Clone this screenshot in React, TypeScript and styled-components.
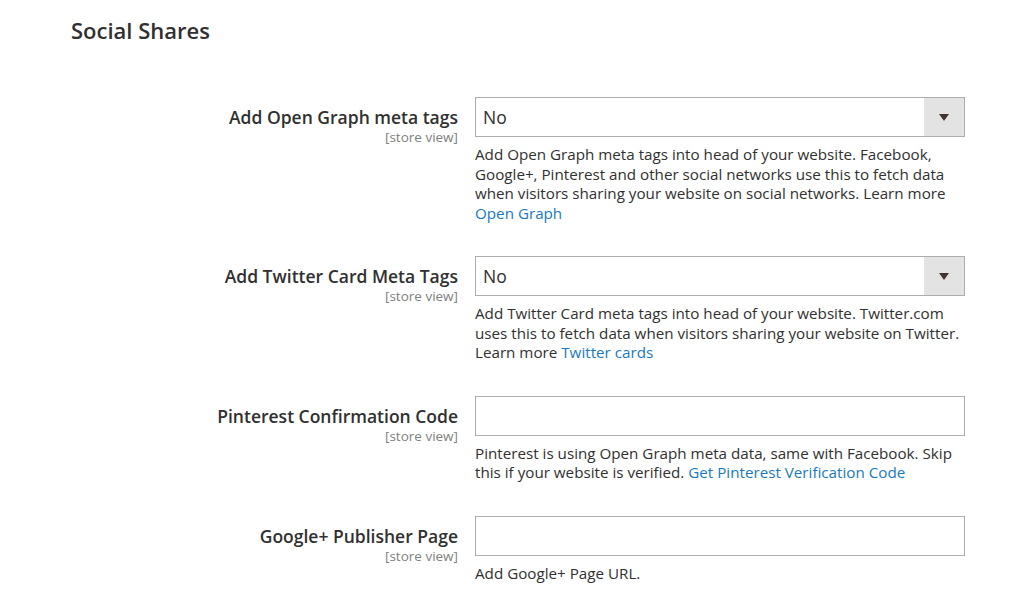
import type { ReactNode } from 'react';
import styled, { createGlobalStyle } from 'styled-components';

const GlobalStyle = createGlobalStyle`
  body {
    margin: 0;
    background: #fff;
    font-family: 'Open Sans', 'Liberation Sans', sans-serif;
    color: #303030;
  }
`;

const Page = styled.div`
  width: 1024px;
  height: 612px;
  box-sizing: border-box;
  padding-top: 15px;
  overflow: hidden;
`;

const Title = styled.h2`
  margin: 0 0 0 71px;
  font-size: 22px;
  line-height: 30px;
  font-weight: 600;
  color: #303030;
`;

const Form = styled.div`
  margin-top: 52px;
  display: flex;
  flex-direction: column;
  gap: 33px;
`;

const Row = styled.div`
  display: grid;
  grid-template-columns: 458px 490px;
  column-gap: 17px;
`;

const LabelCol = styled.div`
  display: flex;
  flex-direction: column;
  align-items: flex-end;
  padding-top: 8px;
`;

const Label = styled.div`
  font-size: 17.5px;
  line-height: 24px;
  font-weight: 600;
  color: #303030;
  white-space: nowrap;
`;

const Scope = styled.div`
  font-size: 13.5px;
  line-height: 16px;
  color: #808080;
`;

const Control = styled.div`
  display: flex;
  flex-direction: column;
`;

const Select = styled.div`
  height: 40px;
  box-sizing: border-box;
  border: 1px solid #adadad;
  display: flex;
  align-items: stretch;
  background: #fff;
`;

const SelectValue = styled.div`
  flex: 1;
  display: flex;
  align-items: center;
  padding-left: 7px;
  font-size: 17.5px;
  color: #303030;
`;

const SelectArrow = styled.div`
  width: 40px;
  background: #e3e3e3;
  display: flex;
  align-items: center;
  justify-content: center;
`;

const TextInput = styled.input`
  height: 40px;
  box-sizing: border-box;
  border: 1px solid #adadad;
  margin: 0;
  padding: 0 8px;
  font-family: inherit;
  font-size: 17.5px;
`;

const Help = styled.p`
  margin: 8px 0 0;
  font-size: 15.2px;
  line-height: 19.5px;
  color: #303030;
`;

const HelpLink = styled.a`
  color: #1979c3;
  text-decoration: none;
`;

type Field = {
  label: string;
  kind: 'select' | 'text';
  help: ReactNode;
};

const fields: Field[] = [
  {
    label: 'Add Open Graph meta tags',
    kind: 'select',
    help: (
      <>
        Add Open Graph meta tags into head of your website. Facebook, Google+,
        Pinterest and other social networks use this to fetch data when visitors
        sharing your website on social networks. Learn more{' '}
        <HelpLink href='#'>Open Graph</HelpLink>
      </>
    ),
  },
  {
    label: 'Add Twitter Card Meta Tags',
    kind: 'select',
    help: (
      <>
        Add Twitter Card meta tags into head of your website. Twitter.com uses
        this to fetch data when visitors sharing your website on Twitter. Learn
        more <HelpLink href='#'>Twitter cards</HelpLink>
      </>
    ),
  },
  {
    label: 'Pinterest Confirmation Code',
    kind: 'text',
    help: (
      <>
        Pinterest is using Open Graph meta data, same with Facebook. Skip this
        if your website is verified.{' '}
        <HelpLink href='#'>Get Pinterest Verification Code</HelpLink>
      </>
    ),
  },
  {
    label: 'Google+ Publisher Page',
    kind: 'text',
    help: <>Add Google+ Page URL.</>,
  },
];

const App = () => {
  return (
    <Page>
      <GlobalStyle />
      <Title>Social Shares</Title>
      <Form>
        {fields.map((f) => (
          <Row key={f.label}>
            <LabelCol>
              <Label>{f.label}</Label>
              <Scope>[store view]</Scope>
            </LabelCol>
            <Control>
              {f.kind === 'select' ? (
                <Select>
                  <SelectValue>No</SelectValue>
                  <SelectArrow>
                    <svg width='10' height='7' viewBox='0 0 10 7'>
                      <path d='M0 0 H10 L5 7 Z' fill='#41362f' />
                    </svg>
                  </SelectArrow>
                </Select>
              ) : (
                <TextInput />
              )}
              <Help>{f.help}</Help>
            </Control>
          </Row>
        ))}
      </Form>
    </Page>
  );
};

export default App;
